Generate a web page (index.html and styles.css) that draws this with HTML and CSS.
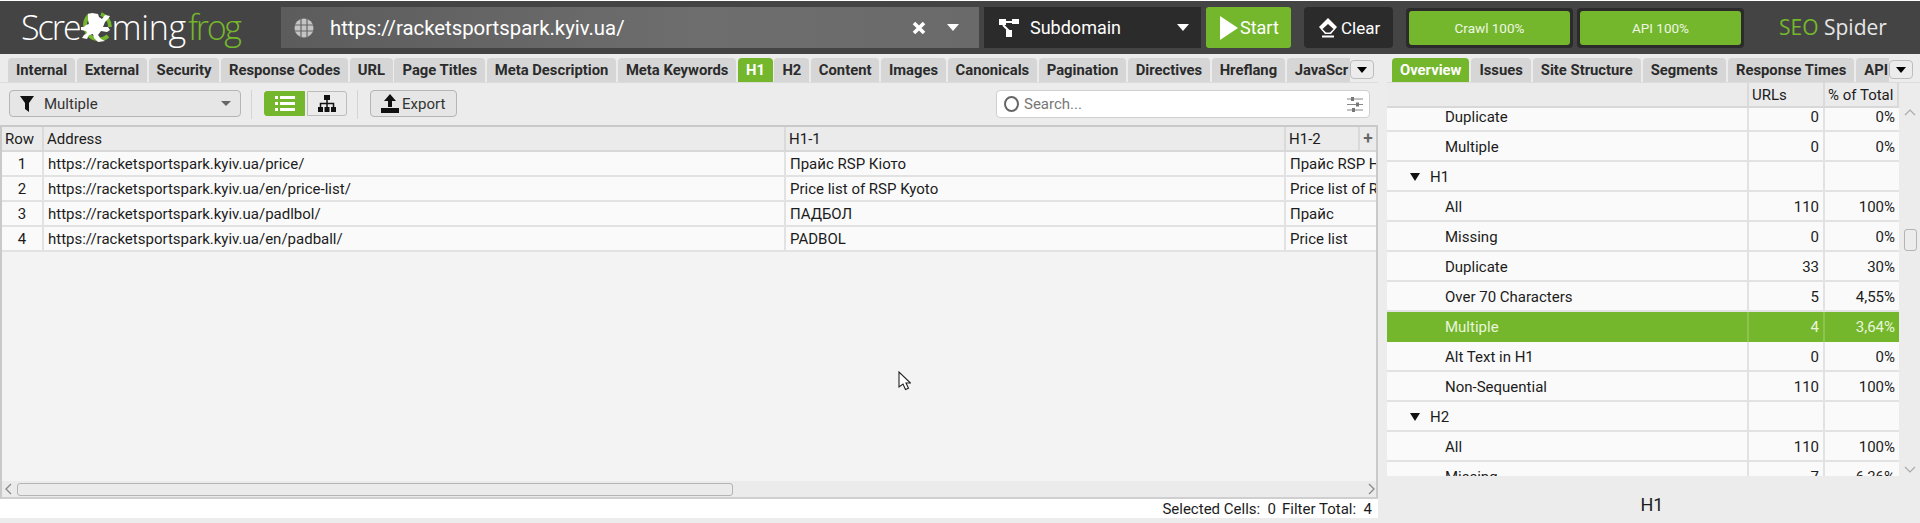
FILE: index.html
```html
<!DOCTYPE html>
<html lang="en">
<head>
<meta charset="utf-8">
<title>Screaming Frog SEO Spider</title>
<link rel="stylesheet" href="styles.css">
</head>
<body>
<div class="app">
  <header class="header">
    <div class="logo">
      <span class="logo-w">Scre</span>
      <svg class="frog" viewBox="0 0 34 34" width="34" height="34">
        <path d="M11 3.500A14 14 0 1 0 29 25" fill="none" stroke="#75b72c" stroke-width="3.800"/>
        <path d="M22 3A14 14 0 0 1 31 16" fill="none" stroke="#75b72c" stroke-width="3.800"/>
        <path d="M13 2l6 1 1 3 3 2 3-4 5 1-2 3-3 3-2 5 5 0 2 3-3 2-6-1-3 4 3 4 4 2-7 1-4-4-1-4-4 1-2 4-5-1 2-3 3-2-1-2-5-1 0-3 3 0 2-2 3-1-1-4 0-6z" fill="#fff"/>
      </svg>
      <span class="logo-w logo-m">ming</span><span class="logo-g logo-f">frog</span>
    </div>
    <div class="url-bar">
      <svg class="globe" viewBox="0 0 20 20" width="20" height="20"><circle cx="10" cy="10" r="9.500" fill="#c4c4c4"/><path d="M0 7h20M0 13h20M7 0v20M13 0v20" stroke="#666" stroke-width="1.200"/></svg>
      <span class="url-text">https://racketsportspark.kyiv.ua/</span>
      <svg class="url-x" viewBox="0 0 14 14" width="14" height="14"><path d="M2 2l10 10M12 2L2 12" stroke="#fff" stroke-width="3.600"/></svg>
      <span class="caret-w url-caret"></span>
    </div>
    <div class="mode">
      <svg class="mode-icon" viewBox="0 0 22 20" width="22" height="20"><path d="M1 1h7v6H1zM14 1h7v5h-7zM8 12h6v7H8z" fill="#fff"/><path d="M8 4h6M5 7l6 6" stroke="#fff" stroke-width="2"/></svg>
      <span class="mode-text">Subdomain</span>
      <span class="caret-w mode-caret"></span>
    </div>
    <button class="start">
      <svg viewBox="0 0 18 24" width="18" height="24"><path d="M0 0l18 12L0 24z" fill="#fff"/></svg>
      <span>Start</span>
    </button>
    <button class="clear">
      <svg viewBox="0 0 22 20" width="22" height="20"><path d="M11 0l9 9-6 7H8L2 9z" fill="#fff"/><path d="M5.500 11l5.500-5 5.500 5-3.500 3.500H9z" fill="#2b2b2b"/><path d="M5 18.500h12" stroke="#fff" stroke-width="2"/></svg>
      <span>Clear</span>
    </button>
    <div class="progress first"><div class="progress-in">Crawl 100%</div></div>
    <div class="progress"><div class="progress-in">API 100%</div></div>
    <div class="brand"><span class="logo-g">SEO</span> Spider</div>
  </header>

  <main class="main">
    <section class="left">
      <div class="tabbar left-tabs">
        <nav class="tabs tabs-l">
          <span class="tab">Internal</span><span class="tab">External</span><span class="tab">Security</span><span class="tab">Response Codes</span><span class="tab">URL</span><span class="tab">Page Titles</span><span class="tab">Meta Description</span><span class="tab">Meta Keywords</span><span class="tab on">H1</span><span class="tab">H2</span><span class="tab">Content</span><span class="tab">Images</span><span class="tab">Canonicals</span><span class="tab">Pagination</span><span class="tab">Directives</span><span class="tab">Hreflang</span><span class="tab">JavaScr</span>
        </nav>
        <button class="more"><span class="caret-b"></span></button>
      </div>
      <div class="toolbar">
        <div class="filter">
          <svg viewBox="0 0 14 16" width="14" height="16"><path d="M0 0h14L9 7v9L5 13V7z" fill="#111"/></svg>
          <span class="filter-text">Multiple</span>
          <span class="caret-g"></span>
        </div>
        <span class="sep"></span>
        <button class="view on">
          <svg viewBox="0 0 20 15" width="20" height="15"><path d="M0 0h3v3H0zM5 0h15v3H5zM0 6h3v3H0zM5 6h15v3H5zM0 12h3v3H0zM5 12h15v3H5z" fill="#fff"/></svg>
        </button>
        <button class="view">
          <svg viewBox="0 0 18 17" width="18" height="17"><path d="M6 0h6v5H6zM0 12h5v5H0zM6.500 12h5v5h-5zM13 12h5v5h-5z" fill="#111"/><path d="M9 5v7M2.500 12V8.500h13V12" fill="none" stroke="#111" stroke-width="1.500"/></svg>
        </button>
        <span class="sep"></span>
        <button class="export">
          <svg viewBox="0 0 18 19" width="18" height="19"><path d="M9 0l6 7h-4v6H7V7H3z" fill="#111"/><path d="M0 14h18v5H0z" fill="#111"/></svg>
          <span>Export</span>
        </button>
        <div class="search">
          <span class="ring"></span>
          <span class="search-text">Search...</span>
          <svg viewBox="0 0 16 15" width="16" height="15"><path d="M0 2h16M0 7.500h16M0 13h16" stroke="#888" stroke-width="1"/><path d="M4 0h3v4H4zM9 5.500h3v4H9zM5 11h3v4H5z" fill="#777"/></svg>
        </div>
      </div>

      <div class="frame">
        <div class="grid-row head">
          <div class="cell c-row">Row</div><div class="cell">Address</div><div class="cell">H1-1</div><div class="cell">H1-2</div><div class="cell plus">✚</div>
        </div>
        <div class="grid-row"><div class="cell c-n">1</div><div class="cell">https://racketsportspark.kyiv.ua/price/</div><div class="cell">Прайс RSP Кіото</div><div class="cell clip">Прайс RSP Н</div></div>
        <div class="grid-row"><div class="cell c-n">2</div><div class="cell">https://racketsportspark.kyiv.ua/en/price-list/</div><div class="cell">Price list of RSP Kyoto</div><div class="cell clip">Price list of R</div></div>
        <div class="grid-row"><div class="cell c-n">3</div><div class="cell">https://racketsportspark.kyiv.ua/padlbol/</div><div class="cell">ПАДБОЛ</div><div class="cell clip">Прайс</div></div>
        <div class="grid-row"><div class="cell c-n">4</div><div class="cell">https://racketsportspark.kyiv.ua/en/padball/</div><div class="cell">PADBOL</div><div class="cell clip">Price list</div></div>
        <div class="empty"></div>
        <div class="hscroll">
          <svg class="arrow" viewBox="0 0 7 12" width="7" height="12"><path d="M6 1L1 6l5 5" fill="none" stroke="#888" stroke-width="1.300"/></svg>
          <div class="hthumb"></div>
          <svg class="arrow arrow-r" viewBox="0 0 7 12" width="7" height="12"><path d="M1 1l5 5-5 5" fill="none" stroke="#888" stroke-width="1.300"/></svg>
        </div>
      </div>
      <div class="status"><span>Selected Cells:&nbsp; 0</span><span>Filter Total:&nbsp; 4</span></div>
    </section>

    <section class="right">
      <div class="tabbar right-tabs">
        <nav class="tabs tabs-r">
          <span class="tab on">Overview</span><span class="tab">Issues</span><span class="tab">Site Structure</span><span class="tab">Segments</span><span class="tab">Response Times</span><span class="tab">API</span>
        </nav>
        <button class="more"><span class="caret-b"></span></button>
      </div>
      <div class="ov">
        <div class="ov-table">
          <div class="ov-head"><div></div><div class="oh">URLs</div><div class="oh">% of Total</div></div>
          <div class="ov-scroll">
            <div class="ov-list">
              <div class="ov-row"><div class="sub">Duplicate</div><div class="num">0</div><div class="num">0%</div></div>
              <div class="ov-row"><div class="sub">Multiple</div><div class="num">0</div><div class="num">0%</div></div>
              <div class="ov-row"><div class="grp"><span class="tri"></span>H1</div><div class="num"></div><div class="num"></div></div>
              <div class="ov-row"><div class="sub">All</div><div class="num">110</div><div class="num">100%</div></div>
              <div class="ov-row"><div class="sub">Missing</div><div class="num">0</div><div class="num">0%</div></div>
              <div class="ov-row"><div class="sub">Duplicate</div><div class="num">33</div><div class="num">30%</div></div>
              <div class="ov-row"><div class="sub">Over 70 Characters</div><div class="num">5</div><div class="num">4,55%</div></div>
              <div class="ov-row sel"><div class="sub">Multiple</div><div class="num">4</div><div class="num">3,64%</div></div>
              <div class="ov-row"><div class="sub">Alt Text in H1</div><div class="num">0</div><div class="num">0%</div></div>
              <div class="ov-row"><div class="sub">Non-Sequential</div><div class="num">110</div><div class="num">100%</div></div>
              <div class="ov-row"><div class="grp"><span class="tri"></span>H2</div><div class="num"></div><div class="num"></div></div>
              <div class="ov-row"><div class="sub">All</div><div class="num">110</div><div class="num">100%</div></div>
              <div class="ov-row"><div class="sub">Missing</div><div class="num">7</div><div class="num">6,36%</div></div>
            </div>
          </div>
        </div>
        <div class="vscroll">
          <svg viewBox="0 0 12 7" width="12" height="7"><path d="M1 6l5-5 5 5" fill="none" stroke="#aaa" stroke-width="1.200"/></svg>
          <div class="vthumb"></div>
          <svg viewBox="0 0 12 7" width="12" height="7"><path d="M1 1l5 5 5-5" fill="none" stroke="#aaa" stroke-width="1.200"/></svg>
        </div>
      </div>
      <div class="caption">H1</div>
    </section>
  </main>
</div>
<svg class="cursor" viewBox="0 0 13 20" width="13" height="20"><path d="M1 1v15l4-3 2.500 5.500 3-1.300L8 12h4.500z" fill="#fff" stroke="#222" stroke-width="1.100"/></svg>
</body>
</html>
```
FILE: styles.css
```css
* { box-sizing: border-box; }
html, body { margin: 0; padding: 0; }
body { width: 1920px; height: 523px; overflow: hidden; background: #ececec; font-family: Roboto, "Noto Sans CJK SC", sans-serif; font-size: 15px; color: #1c1c1c; position: relative; }
button { font-family: inherit; margin: 0; padding: 0; border: 0; }
.app { width: 1920px; height: 523px; display: flex; flex-direction: column; padding-top: 1px; background: linear-gradient(#fff 1px, #ececec 1px); }

.header { height: 53px; background: #444; display: flex; align-items: flex-start; padding: 6px 0 0 21px; color: #fff; flex: none; }
.logo { width: 260px; height: 41px; display: flex; align-items: center; font-family: "Open Sans", sans-serif; font-weight: 300; font-size: 34px; letter-spacing: -2px; line-height: 41px; flex: none; }
.logo-w { color: #fff; }
.logo-m { letter-spacing: -0.300px; margin-right: 2px; }
.logo-f { letter-spacing: -2.300px; }
.logo-g { color: #75b72c; }
.frog { flex: none; margin: 0 -1px 0 -1px; }
.url-bar { width: 698px; height: 41px; background: linear-gradient(90deg, #5c5c5c, #6e6e6e 60%, #6a6a6a); display: flex; align-items: center; padding-left: 13px; flex: none; }
.url-text { font-size: 20.350px; margin-left: 16px; flex: 1; color: #fff; }
.url-x { margin-right: 21px; }
.caret-w { width: 0; height: 0; border-left: 6px solid transparent; border-right: 6px solid transparent; border-top: 7px solid #fff; display: block; }
.url-caret { margin-right: 20px; }
.mode { width: 217px; height: 41px; background: #2b2b2b; margin-left: 5px; display: flex; align-items: center; padding-left: 14px; flex: none; }
.mode-text { font-size: 18px; margin-left: 10px; flex: 1; }
.mode-caret { margin-right: 12px; }
.start { width: 85px; height: 41px; background: #75b72c; color: #fff; margin-left: 5px; border-radius: 3px; display: flex; align-items: center; padding-left: 14px; gap: 2px; font-size: 18px; flex: none; }
.clear { width: 89px; height: 41px; background: #2b2b2b; color: #fff; margin-left: 13px; border-radius: 4px; display: flex; align-items: center; padding-left: 13px; gap: 2px; font-size: 17px; flex: none; }
.progress { width: 167px; height: 40px; margin-top: 1px; background: #2b2b2b; border-radius: 4px; padding: 3px; flex: none; margin-left: 4px; }
.progress.first { margin-left: 13px; }
.progress-in { height: 100%; background: #75b72c; border-radius: 3px; display: flex; align-items: center; justify-content: center; font-size: 13.500px; color: #eef6e4; }
.brand { font-family: "Open Sans", sans-serif; font-size: 21px; font-weight: 400; color: #e6e6e6; margin-left: 35px; height: 41px; line-height: 41px; }
.brand .logo-g { font-weight: 400; }

.main { flex: 1; display: flex; min-height: 0; padding-top: 4px; }
.left { width: 1378px; display: flex; flex-direction: column; flex: none; }
.right { width: 533px; margin-left: 9px; display: flex; flex-direction: column; flex: none; }

.tabbar { height: 25px; display: flex; align-items: flex-start; flex: none; border-bottom: 1px solid #dcdcdc; }
.tabs { display: flex; gap: 1.500px; height: 24px; overflow: hidden; flex: none; }
.tabs-l { width: 1342px; margin-left: 8px; }
.tabs-r { width: 497px; margin-left: 5px; gap: 2px; }
.tab { flex: none; height: 24px; line-height: 24px; padding: 0 8px; background: #d6d6d6; border-radius: 4px 4px 0 0; font-weight: 700; font-size: 14.800px; color: #2b2b2b; }
.tab.on { background: #75b72c; color: #fff; }
.more { width: 24px; height: 19px; margin-top: 2px; background: #ececec; border: 1px solid #bdbdbd; border-radius: 4px; display: flex; align-items: center; justify-content: center; flex: none; }
.caret-b { width: 0; height: 0; border-left: 5px solid transparent; border-right: 5px solid transparent; border-top: 6px solid #000; }

.toolbar { height: 42px; display: flex; align-items: flex-start; padding: 7px 8px 0 9px; flex: none; }
.filter { width: 232px; height: 27px; background: #e6e6e6; border: 1px solid #b5b5b5; border-radius: 4px; display: flex; align-items: center; padding-left: 10px; }
.filter-text { margin-left: 10px; flex: 1; font-size: 15px; color: #333; }
.caret-g { width: 0; height: 0; border-left: 5px solid transparent; border-right: 5px solid transparent; border-top: 5px solid #666; margin-right: 9px; }
.sep { width: 1px; height: 29px; background: #d4d4d4; margin: 0 12px 0 10px; flex: none; }
.view { width: 40px; height: 25px; margin-top: 1px; background: #ebebeb; border: 1px solid #bcbcbc; border-radius: 0 3px 3px 0; display: flex; align-items: center; justify-content: center; margin-left: 2px; flex: none; }
.view.on { width: 41px; margin-left: 0; background: #75b72c; border-color: #75b72c; border-radius: 3px 0 0 3px; }
.export { width: 87px; height: 27px; background: #e6e6e6; border: 1px solid #b5b5b5; border-radius: 4px; display: flex; align-items: center; padding-left: 10px; gap: 3px; font-size: 15px; color: #333; flex: none; }
.search { width: 374px; height: 28px; margin-left: auto; background: #fff; border: 1px solid #cfcfcf; border-radius: 4px; display: flex; align-items: center; padding: 0 6px 0 7px; }
.ring { width: 15px; height: 16px; border: 2px solid #666; border-radius: 50%; flex: none; }
.search-text { flex: 1; margin-left: 5px; color: #777; font-size: 15px; }

.frame { height: 374px; border: 2px solid #c9c9c9; background: #f3f3f3; border-bottom-color: #cfcfcf; display: flex; flex-direction: column; flex: none; overflow: hidden; }
.grid-row { display: grid; grid-template-columns: 42px 742px 500px 74px 1fr; height: 25px; background: #fafafa; flex: none; border-bottom: 2px solid #e2e2e2; }
.grid-row.head { background: #ebebeb; border-bottom: 2px solid #d8d8d8; }
.cell { border-right: 2px solid #e2e2e2; line-height: 24px; padding-left: 4px; white-space: nowrap; overflow: hidden; }
.head .cell { border-right-color: #dadada; padding-left: 3px; }
.cell.clip { border-right: 0; grid-column: span 2; }
.c-n { text-align: center; padding-left: 0; }
.head .plus { border-right: 0; text-align: center; padding: 0; font-size: 10px; color: #666; }
.empty { flex: 1; }
.hscroll { height: 16px; background: #ebebeb; display: flex; align-items: center; padding-left: 3px; flex: none; }
.hthumb { width: 716px; height: 13px; margin-left: 5px; border: 1px solid #b4b4b4; border-radius: 3px; background: #ebebeb; }
.arrow { flex: none; }
.arrow-r { margin-left: auto; margin-right: 1px; }
.status { height: 19px; background: #fff; display: flex; justify-content: flex-end; gap: 6px; padding-right: 6px; line-height: 20px; flex: none; font-size: 15px; }

.ov { height: 393px; display: flex; flex: none; }
.ov-table { width: 512px; display: flex; flex-direction: column; flex: none; }
.ov-head { height: 25px; display: grid; grid-template-columns: 360px 76px 76px; border-bottom: 2px solid #d8d8d8; border-right: 2px solid #dadada; background: #ebebeb; flex: none; }
.oh { border-left: 2px solid #dadada; padding-left: 3px; line-height: 24px; white-space: nowrap; }
.ov-scroll { flex: 1; min-height: 0; overflow: hidden; }
.ov-list { margin-top: -6px; }
.ov-row { display: grid; grid-template-columns: 360px 76px 76px; height: 30px; background: #fafafa; border-bottom: 2px solid #e2e2e2; line-height: 30px; }
.ov-row .num { border-left: 2px solid #e2e2e2; text-align: right; padding-right: 4px; }
.sub { padding-left: 58px; }
.grp { padding-left: 23px; display: flex; align-items: center; }
.tri { width: 0; height: 0; border-left: 5px solid transparent; border-right: 5px solid transparent; border-top: 8px solid #111; margin-right: 10px; }
.ov-row.sel { background: #75b72c; color: #eaf5dc; border-bottom-color: #75b72c; }
.ov-row.sel .num { border-left-color: #8cc44d; }
.vscroll { width: 21px; display: flex; flex-direction: column; align-items: center; justify-content: space-between; padding: 26px 0 3px; position: relative; }
.vthumb { position: absolute; top: 146px; left: 5px; width: 13px; height: 22px; border: 1px solid #b4b4b4; border-radius: 3px; background: #ececec; }
.caption { flex: 1; text-align: center; font-size: 18px; line-height: 58px; width: 530px; }
.cursor { position: absolute; left: 898px; top: 371px; }
```
